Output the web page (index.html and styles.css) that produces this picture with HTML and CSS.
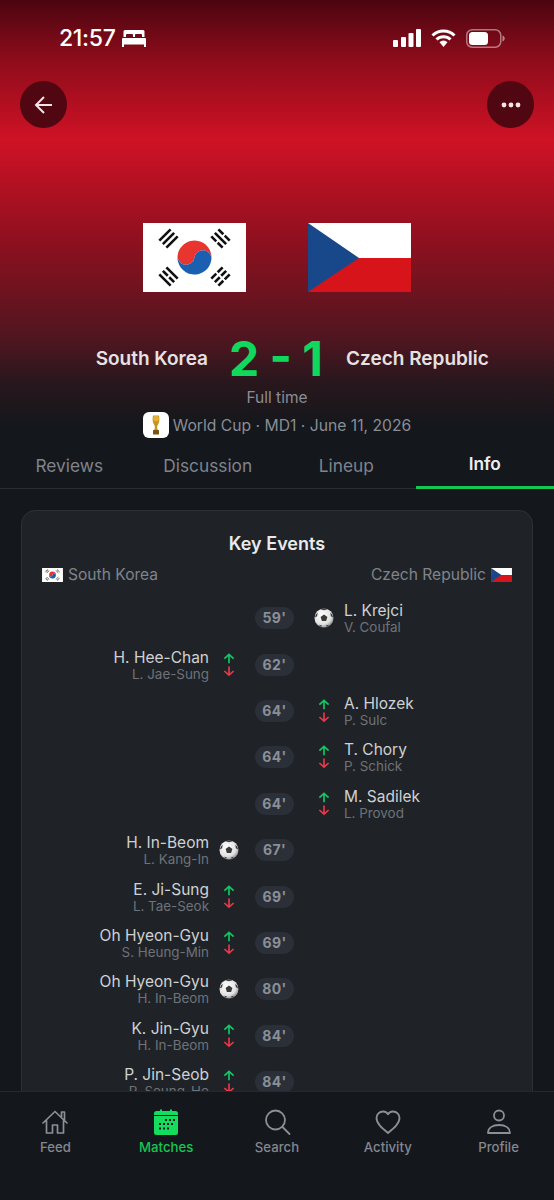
FILE: index.html
```html
<!DOCTYPE html>
<html lang="en">
<head>
  <meta charset="UTF-8">
  <meta name="viewport" content="width=device-width, initial-scale=1.0">
  <title>South Korea vs Czech Republic</title>
  <link rel="stylesheet" href="styles.css">
</head>
<body>
  <svg class="defs" width="0" height="0">
    <defs>
      <radialGradient id="ballShade" cx="40%" cy="35%" r="70%">
        <stop offset="0" stop-color="#fff"/>
        <stop offset="0.7" stop-color="#e0e0e0"/>
        <stop offset="1" stop-color="#858585"/>
      </radialGradient>
      <symbol id="ball" viewBox="0 0 20 20">
        <circle cx="10" cy="10" r="9.500" fill="url(#ballShade)"/>
        <path d="M10 6.600l3.400 2.400-1.300 4H7.900l-1.300-4z" fill="#3a3a3a"/>
        <path d="M6.500 1.200l3.500 1 3.500-1-1.600-.8H8zM.8 9.500l1.300-3.300 1.600-1.500-.6 3.600zM19.200 9.500l-1.300-3.300-1.600-1.500.6 3.600zM5 16.800l3 .6-1 1.500zM15 16.800l-3 .6 1 1.500z" fill="#3a3a3a"/>
      </symbol>
      <symbol id="swap" viewBox="0 0 12 26">
        <path d="M6 11V1.500M1 6l5-4.500L11 6" fill="none" stroke="#12c765" stroke-width="1.800"/>
        <path d="M6 14.500V24M1 19.500L6 24l5-4.500" fill="none" stroke="#e8394a" stroke-width="1.800"/>
      </symbol>
      <symbol id="korea" viewBox="0 0 103 69">
        <rect width="103" height="69" fill="#fff"/>
        <g transform="rotate(8 51.500 34.500)">
          <path d="M34.500 34.500a17 17 0 0 1 34 0 8.500 8.500 0 0 0-17 0 8.500 8.500 0 0 1-17 0z" fill="#e8352f"/>
          <path d="M34.500 34.500a8.500 8.500 0 0 0 17 0 8.500 8.500 0 0 1 17 0 17 17 0 0 1-34 0z" fill="#1a5fb0"/>
        </g>
        <g fill="none" stroke="#111" stroke-width="2.600">
          <g transform="translate(25.500 15.500) rotate(-45)">
            <path d="M-8-5H8M-8 0H8M-8 5H8"/>
          </g>
          <g transform="translate(77.500 15.500) rotate(45)">
            <path d="M-8-5h7M1-5h7M-8 0H8M-8 5h7M1 5h7"/>
          </g>
          <g transform="translate(25.500 53.500) rotate(45)">
            <path d="M-8-5H8M-8 0h7M1 0h7M-8 5H8"/>
          </g>
          <g transform="translate(77.500 53.500) rotate(-45)">
            <path d="M-8-5h7M1-5h7M-8 0h7M1 0h7M-8 5h7M1 5h7"/>
          </g>
        </g>
      </symbol>
      <symbol id="czech" viewBox="0 0 103 69">
        <rect width="103" height="35" fill="#fff"/>
        <rect y="35" width="103" height="34" fill="#d7141a"/>
        <path d="M0 0l51 35L0 69z" fill="#19488a"/>
      </symbol>
    </defs>
  </svg>

  <div class="screen">
    <header class="hero">
      <div class="status-bar">
        <div class="status-left">
          <span class="clock">21:57</span>
          <svg class="bed" viewBox="0 0 24 17" width="24" height="17">
            <path d="M3 0h18a1.500 1.500 0 0 1 1.500 1.500V7H20V5a1 1 0 0 0-1-1h-5a1 1 0 0 0-1 1v2h-2V5a1 1 0 0 0-1-1H5a1 1 0 0 0-1 1v2H1.500V1.500A1.500 1.500 0 0 1 3 0zM1 8h22a1 1 0 0 1 1 1v8h-2v-2.500H2V17H0V9a1 1 0 0 1 1-1z" fill="#fff"/>
          </svg>
        </div>
        <div class="status-right">
          <svg viewBox="0 0 28 18" width="28" height="18">
            <rect x="0" y="11" width="5" height="7" rx="1" fill="#fff"/>
            <rect x="8" y="8" width="5" height="10" rx="1" fill="#fff"/>
            <rect x="15.500" y="4" width="5" height="14" rx="1" fill="#fff"/>
            <rect x="23" y="0" width="5" height="18" rx="1" fill="#fff"/>
          </svg>
          <svg viewBox="0 0 25 18" width="25" height="18">
            <path d="M1.500 6.500a15.500 15.500 0 0 1 22 0M5.500 10.500a10 10 0 0 1 14 0" fill="none" stroke="#fff" stroke-width="3"/>
            <path d="M8.500 13.200a5.500 5.500 0 0 1 8 0L12.500 18z" fill="#fff"/>
          </svg>
          <svg viewBox="0 0 39 19" width="39" height="19">
            <rect x="0.750" y="0.750" width="34" height="17.500" rx="5.500" fill="none" stroke="#fff" stroke-opacity="0.45" stroke-width="1.500"/>
            <rect x="3" y="3" width="19" height="13" rx="3.500" fill="#fff"/>
            <path d="M36.500 6.500c1.500.5 2.200 1.600 2.200 3s-.7 2.500-2.200 3z" fill="#fff" fill-opacity="0.5"/>
          </svg>
        </div>
      </div>

      <div class="top-actions">
        <button class="round-btn">
          <svg viewBox="0 0 20 20" width="20" height="20">
            <path d="M18 10H2.500M10 2l-8 8 8 8" fill="none" stroke="#f3e4e5" stroke-width="2"/>
          </svg>
        </button>
        <button class="round-btn">
          <svg viewBox="0 0 20 6" width="20" height="6">
            <circle cx="3" cy="3" r="2.400" fill="#f3e4e5"/>
            <circle cx="10" cy="3" r="2.400" fill="#f3e4e5"/>
            <circle cx="17" cy="3" r="2.400" fill="#f3e4e5"/>
          </svg>
        </button>
      </div>

      <div class="flags">
        <svg class="flag" width="103" height="69"><use href="#korea"/></svg>
        <svg class="flag" width="103" height="69"><use href="#czech"/></svg>
      </div>

      <div class="score-row">
        <span class="team-name team-home">South Korea</span>
        <span class="score">2 - 1</span>
        <span class="team-name team-away">Czech Republic</span>
      </div>
      <div class="match-state">Full time</div>
      <div class="match-meta">
        <span class="cup-badge">
          <svg viewBox="0 0 12 22" width="12" height="22">
            <path d="M3 1.500h6c.8 3.500.5 7-1.500 10-.6 1.500-.5 3 .5 4.500H4c1-1.500 1.100-3 .5-4.500C2.500 8.500 2.200 5 3 1.500z" fill="#c8951f"/>
            <circle cx="6" cy="4.500" r="2.800" fill="#e3b23a"/>
            <rect x="3" y="16" width="6" height="4.500" rx="0.500" fill="#7a5512"/>
          </svg>
        </span>
        <span>World Cup · MD1 · June 11, 2026</span>
      </div>
    </header>

    <nav class="tabs">
      <a class="tab">Reviews</a>
      <a class="tab">Discussion</a>
      <a class="tab">Lineup</a>
      <a class="tab active">Info</a>
    </nav>

    <main class="content">
      <section class="card">
        <h2>Key Events</h2>
        <div class="teams-row">
          <span class="team-label"><svg width="21" height="14"><use href="#korea"/></svg>South Korea</span>
          <span class="team-label">Czech Republic<svg width="21" height="14"><use href="#czech"/></svg></span>
        </div>

        <div class="events">
          <div class="event">
            <div class="side home"></div>
            <div class="minute">59'</div>
            <div class="side away">
              <svg class="ev-icon"><use href="#ball"/></svg>
              <div class="who"><div class="name">L. Krejci</div><div class="assist">V. Coufal</div></div>
            </div>
          </div>
          <div class="event">
            <div class="side home">
              <div class="who"><div class="name">H. Hee-Chan</div><div class="assist">L. Jae-Sung</div></div>
              <svg class="ev-icon swap"><use href="#swap"/></svg>
            </div>
            <div class="minute">62'</div>
            <div class="side away"></div>
          </div>
          <div class="event">
            <div class="side home"></div>
            <div class="minute">64'</div>
            <div class="side away">
              <svg class="ev-icon swap"><use href="#swap"/></svg>
              <div class="who"><div class="name">A. Hlozek</div><div class="assist">P. Sulc</div></div>
            </div>
          </div>
          <div class="event">
            <div class="side home"></div>
            <div class="minute">64'</div>
            <div class="side away">
              <svg class="ev-icon swap"><use href="#swap"/></svg>
              <div class="who"><div class="name">T. Chory</div><div class="assist">P. Schick</div></div>
            </div>
          </div>
          <div class="event">
            <div class="side home"></div>
            <div class="minute">64'</div>
            <div class="side away">
              <svg class="ev-icon swap"><use href="#swap"/></svg>
              <div class="who"><div class="name">M. Sadilek</div><div class="assist">L. Provod</div></div>
            </div>
          </div>
          <div class="event">
            <div class="side home">
              <div class="who"><div class="name">H. In-Beom</div><div class="assist">L. Kang-In</div></div>
              <svg class="ev-icon"><use href="#ball"/></svg>
            </div>
            <div class="minute">67'</div>
            <div class="side away"></div>
          </div>
          <div class="event">
            <div class="side home">
              <div class="who"><div class="name">E. Ji-Sung</div><div class="assist">L. Tae-Seok</div></div>
              <svg class="ev-icon swap"><use href="#swap"/></svg>
            </div>
            <div class="minute">69'</div>
            <div class="side away"></div>
          </div>
          <div class="event">
            <div class="side home">
              <div class="who"><div class="name">Oh Hyeon-Gyu</div><div class="assist">S. Heung-Min</div></div>
              <svg class="ev-icon swap"><use href="#swap"/></svg>
            </div>
            <div class="minute">69'</div>
            <div class="side away"></div>
          </div>
          <div class="event">
            <div class="side home">
              <div class="who"><div class="name">Oh Hyeon-Gyu</div><div class="assist">H. In-Beom</div></div>
              <svg class="ev-icon"><use href="#ball"/></svg>
            </div>
            <div class="minute">80'</div>
            <div class="side away"></div>
          </div>
          <div class="event">
            <div class="side home">
              <div class="who"><div class="name">K. Jin-Gyu</div><div class="assist">H. In-Beom</div></div>
              <svg class="ev-icon swap"><use href="#swap"/></svg>
            </div>
            <div class="minute">84'</div>
            <div class="side away"></div>
          </div>
          <div class="event">
            <div class="side home">
              <div class="who"><div class="name">P. Jin-Seob</div><div class="assist">P. Seung-Ho</div></div>
              <svg class="ev-icon swap"><use href="#swap"/></svg>
            </div>
            <div class="minute">84'</div>
            <div class="side away"></div>
          </div>
        </div>
      </section>
    </main>

    <footer class="tabbar">
      <a class="bar-item">
        <svg viewBox="0 0 28 28" width="28" height="28">
          <path d="M2 15L14 3.500 26 15M5.500 12.500V25h6v-8h5v8h6V12.500M20.500 8.500V4h3v7.500" fill="none" stroke="#8b8f97" stroke-width="1.700" stroke-linejoin="round" stroke-linecap="round"/>
        </svg>
        <span>Feed</span>
      </a>
      <a class="bar-item active">
        <svg viewBox="0 0 28 28" width="28" height="28">
          <path d="M4.500 3H8V1.500h2V3h8V1.500h2V3h3.500A2.500 2.500 0 0 1 26 5.500V7H2V5.500A2.500 2.500 0 0 1 4.500 3zM2 8h24v16.500a2.500 2.500 0 0 1-2.500 2.500h-19A2.500 2.500 0 0 1 2 24.500z" fill="#14dc5c"/>
          <g fill="#14171c">
            <rect x="13" y="11" width="2" height="2"/><rect x="17" y="11" width="2" height="2"/><rect x="21" y="11" width="2" height="2"/>
            <rect x="7" y="15" width="2" height="2"/><rect x="11" y="15" width="2" height="2"/><rect x="15" y="15" width="2" height="2"/><rect x="19" y="15" width="2" height="2"/>
            <rect x="7" y="19.500" width="2" height="2"/><rect x="11" y="19.500" width="2" height="2"/><rect x="15" y="19.500" width="2" height="2"/>
          </g>
        </svg>
        <span>Matches</span>
      </a>
      <a class="bar-item">
        <svg viewBox="0 0 28 28" width="28" height="28">
          <circle cx="12.500" cy="12" r="9.500" fill="none" stroke="#8b8f97" stroke-width="1.800"/>
          <path d="M19.500 19l7 7" stroke="#8b8f97" stroke-width="1.800" stroke-linecap="round"/>
        </svg>
        <span>Search</span>
      </a>
      <a class="bar-item">
        <svg viewBox="0 0 28 28" width="28" height="28">
          <path d="M14 25C8 20 2.500 15.500 2.500 10A6.500 6.500 0 0 1 9 3.500c2 0 3.900 1 5 2.800 1.100-1.800 3-2.800 5-2.800A6.500 6.500 0 0 1 25.500 10C25.500 15.500 20 20 14 25z" fill="none" stroke="#8b8f97" stroke-width="1.800" stroke-linejoin="round"/>
        </svg>
        <span>Activity</span>
      </a>
      <a class="bar-item">
        <svg viewBox="0 0 28 28" width="28" height="28">
          <circle cx="14" cy="7.500" r="5" fill="none" stroke="#8b8f97" stroke-width="1.800"/>
          <path d="M3 25c0-5 4.500-8 11-8s11 3 11 8z" fill="none" stroke="#8b8f97" stroke-width="1.800" stroke-linejoin="round"/>
        </svg>
        <span>Profile</span>
      </a>
    </footer>
  </div>
</body>
</html>
```

FILE: styles.css
```css
* {
  margin: 0;
  padding: 0;
  box-sizing: border-box;
  font-family: 'Inter', 'Liberation Sans', sans-serif;
}

body {
  background: #14171c;
}

.defs {
  display: block;
  height: 0;
}

.screen {
  height: 1200px;
  display: flex;
  flex-direction: column;
  overflow: hidden;
}

.hero {
  height: 441px;
  flex-shrink: 0;
  background: linear-gradient(180deg, #4b0510 0, #8e0c1b 60px, #cf1225 140px, #8f101f 240px, #4f1620 340px, #2a171d 380px, #14171c 425px);
}

.status-bar {
  height: 77px;
  padding: 26px 49px 0 59px;
  display: flex;
  justify-content: space-between;
  align-items: flex-start;
}

.status-left {
  display: flex;
  align-items: center;
  gap: 6px;
  height: 24px;
}

.clock {
  color: #fff;
  font-size: 23px;
  font-weight: 500;
  letter-spacing: -0.3px;
}

.status-right {
  display: flex;
  align-items: center;
  gap: 10px;
  height: 24px;
}

.top-actions {
  display: flex;
  justify-content: space-between;
  padding: 4px 20px 0;
}

.round-btn {
  width: 47px;
  height: 47px;
  border: none;
  border-radius: 50%;
  background: #500711;
  display: flex;
  align-items: center;
  justify-content: center;
}

.flags {
  display: flex;
  justify-content: center;
  gap: 62px;
  margin-top: 95px;
}

.flag {
  display: block;
}

.score-row {
  height: 56px;
  margin-top: 37px;
  display: grid;
  grid-template-columns: 208px 136px 1fr;
  align-items: center;
}

.team-name {
  color: #e6e2e3;
  font-size: 19px;
  font-weight: 600;
}

.team-home {
  text-align: right;
}

.team-away {
  padding-left: 2px;
}

.score {
  color: #10d85c;
  font-size: 48px;
  font-weight: 700;
  text-align: center;
  word-spacing: -1px;
}

.match-state {
  margin-top: 3px;
  text-align: center;
  color: #8a8d94;
  font-size: 15.500px;
}

.match-meta {
  margin-top: 5px;
  display: flex;
  justify-content: center;
  align-items: center;
  gap: 4px;
  color: #8a8d94;
  font-size: 15.700px;
}

.cup-badge {
  width: 26px;
  height: 26px;
  background: #fff;
  border-radius: 6px;
  display: flex;
  align-items: center;
  justify-content: center;
}

.tabs {
  height: 48px;
  flex-shrink: 0;
  display: grid;
  grid-template-columns: repeat(4, 1fr);
  border-bottom: 1px solid #2a2d32;
}

.tab {
  display: flex;
  align-items: center;
  justify-content: center;
  color: #80848c;
  font-size: 17.300px;
}

.tab.active {
  color: #eceef0;
  font-weight: 600;
  border-bottom: 3px solid #14c653;
  height: 48px;
}

.content {
  flex: 1;
  min-height: 0;
  overflow: hidden;
  padding: 21px 21px 0;
}

.card {
  background: #1f2327;
  border: 1px solid #2d3136;
  border-radius: 14px;
  padding-top: 22px;
}

.card h2 {
  text-align: center;
  color: #e8eaec;
  font-size: 18px;
  font-weight: 600;
  line-height: 22px;
}

.teams-row {
  display: flex;
  justify-content: space-between;
  padding: 10px 20px 0;
}

.team-label {
  display: flex;
  align-items: center;
  gap: 5px;
  color: #7f838b;
  font-size: 15.600px;
  line-height: 20px;
}

.events {
  padding-top: 10px;
}

.event {
  height: 46.400px;
  display: grid;
  grid-template-columns: 233px 39px 1fr;
  align-items: center;
}

.side {
  display: flex;
  align-items: center;
  gap: 10px;
}

.home {
  justify-content: flex-end;
  padding-right: 16px;
  text-align: right;
}

.away {
  padding-left: 20px;
}

.ev-icon {
  width: 20px;
  height: 20px;
  flex-shrink: 0;
}

.ev-icon.swap {
  height: 24px;
}

.name {
  color: #cfd1d4;
  font-size: 15.500px;
  line-height: 19px;
}

.assist {
  color: #6e7279;
  font-size: 13.400px;
  line-height: 15px;
}

.minute {
  height: 22px;
  border-radius: 11px;
  background: #2b3038;
  color: #8a8f97;
  font-size: 14px;
  font-weight: 700;
  letter-spacing: 0.4px;
  line-height: 22px;
  text-align: center;
}

.tabbar {
  height: 109px;
  flex-shrink: 0;
  background: #14171c;
  border-top: 1px solid #25282d;
  display: grid;
  grid-template-columns: repeat(5, 1fr);
  padding-top: 16px;
}

.bar-item {
  display: flex;
  flex-direction: column;
  align-items: center;
  gap: 3px;
  color: #83878f;
  font-size: 13.200px;
  font-weight: 500;
}

.bar-item.active {
  color: #14c653;
}
```
